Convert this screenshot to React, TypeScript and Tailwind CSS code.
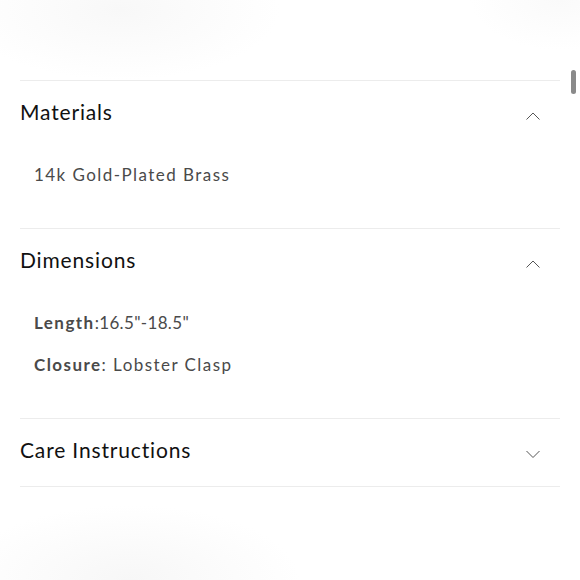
import { ReactNode } from 'react';

const Chevron = ({ up }: { up: boolean }) => (
    <svg width="16" height="10" viewBox="0 0 16 10" fill="none" className="mr-[19px] mt-2">
        {up ? (
            <path d="M1.5 8.5 L8 2 L14.5 8.5" stroke="#555" strokeWidth="1" />
        ) : (
            <path d="M1.5 2 L8 8.5 L14.5 2" stroke="#555" strokeWidth="1" />
        )}
    </svg>
);

const Section = ({ title, open, children }: { title: string; open: boolean; children?: ReactNode }) => (
    <div className="border-t border-[#ececec]">
        <div className="h-[67px] pb-[5px] flex items-center justify-between">
            <span className="text-[21px] text-[#111] tracking-[0.04em]">{title}</span>
            <Chevron up={open} />
        </div>
        {open && <div className="pl-[14px] pt-[15px] pb-[41px] flex flex-col gap-[18px]">{children}</div>}
    </div>
);

const Line = ({ children }: { children: ReactNode }) => (
    <p className="text-[17px] leading-[24px] text-[#4a4a4a] tracking-[0.085em]">{children}</p>
);

export default function App() {
    return (
        <div
            className="relative w-[580px] h-[580px] bg-white overflow-hidden bg-[radial-gradient(160px_70px_at_120px_10px,#f8f8f8,transparent),radial-gradient(90px_50px_at_560px_0px,#fafafa,transparent),radial-gradient(170px_75px_at_130px_580px,#f7f7f7,transparent)]"
            style={{ fontFamily: 'Lato, "Noto Sans", sans-serif' }}
        >
            <div className="px-5 pt-20">
                <Section title="Materials" open>
                    <Line>14k Gold-Plated Brass</Line>
                </Section>
                <Section title="Dimensions" open>
                    <Line>
                        <span className="font-bold">Length</span>
                        <span className="tracking-[0.02em]">:16.5"-18.5"</span>
                    </Line>
                    <Line>
                        <span className="font-bold">Closure</span>: Lobster Clasp
                    </Line>
                </Section>
                <Section title="Care Instructions" open={false} />
                <div className="border-t border-[#ececec]" />
            </div>
            <div className="absolute left-[571px] top-[70px] w-[5px] h-[24px] rounded-full bg-[#8a8a8a]" />
        </div>
    );
}
